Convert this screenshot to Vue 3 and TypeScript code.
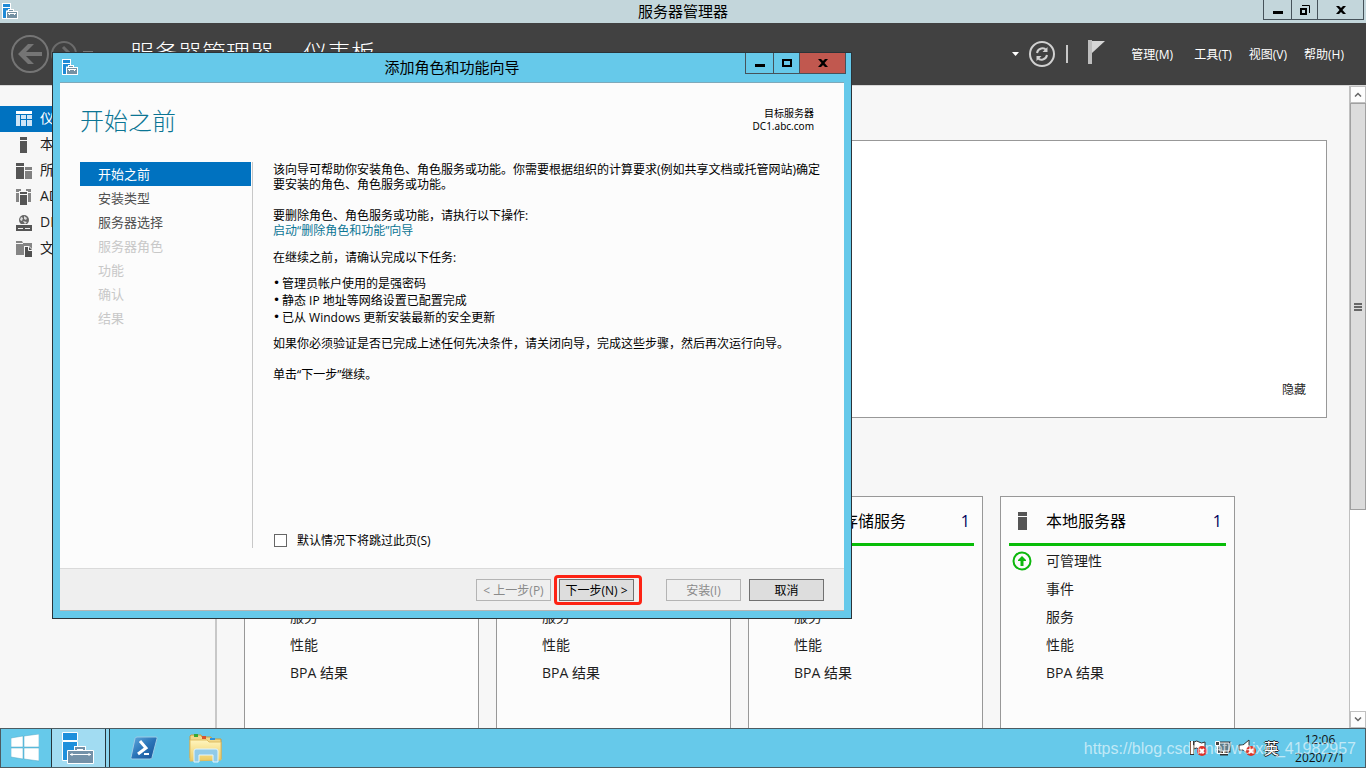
<script setup lang="ts">
import { ref } from 'vue'

interface NavItem {
  label: string
  icon: string
}
interface Tile {
  title: string
  count: number
  icon: string
}
interface Step {
  label: string
  state: 'current' | 'ready' | 'locked'
}

const navItems: NavItem[] = [
  { label: '仪表板', icon: 'dash' },
  { label: '本地服务器', icon: 'server' },
  { label: '所有服务器', icon: 'servers' },
  { label: 'AD DS', icon: 'adds' },
  { label: 'DNS', icon: 'dns' },
  { label: '文件和存储服务', icon: 'files' },
]

const menus: string[] = ['管理(M)', '工具(T)', '视图(V)', '帮助(H)']

const tiles: Tile[] = [
  { title: 'AD DS', count: 1, icon: 'adds' },
  { title: 'DNS', count: 1, icon: 'dns' },
  { title: '文件和存储服务', count: 1, icon: 'files' },
  { title: '本地服务器', count: 1, icon: 'server' },
]
const tileRows: string[] = ['可管理性', '事件', '服务', '性能', 'BPA 结果']

const steps: Step[] = [
  { label: '开始之前', state: 'current' },
  { label: '安装类型', state: 'ready' },
  { label: '服务器选择', state: 'ready' },
  { label: '服务器角色', state: 'locked' },
  { label: '功能', state: 'locked' },
  { label: '确认', state: 'locked' },
  { label: '结果', state: 'locked' },
]

const tasks: string[] = [
  '管理员帐户使用的是强密码',
  '静态 IP 地址等网络设置已配置完成',
  '已从 Windows 更新安装最新的安全更新',
]

const skipPage = ref(false)
</script>

<template>
  <div class="desktop">
    <svg class="defs" width="0" height="0" aria-hidden="true">
      <symbol id="ic-app" viewBox="0 0 16 16">
        <path d="M0 0h9v7h-4v9h-5z" fill="#fff" />
        <path d="M1 1h7v3h-7zM1 5h7v2h-3l-1 1v7h-3z" fill="#1e8ad6" />
        <path d="M6 6h6v2h4v8h-12v-8h2z" fill="#fff" />
        <path d="M5 9h10v6h-10zM7 7h4v1h-4z" fill="#7491a3" />
        <path d="M6 10.500h8M7.500 10v2M12.500 10v2" stroke="#fff" fill="none" />
      </symbol>
      <symbol id="ic-dash" viewBox="0 0 16 16">
        <path d="M0 0h16v3h-16z" fill="#fff" />
        <path d="M0 4h4v11h-4zM5 4h5v4h-5zM11 4h5v4h-5zM5 9h5v6h-5zM11 9h5v6h-5z" fill="#cfe5f6" />
      </symbol>
      <symbol id="ic-server" viewBox="0 0 16 16">
        <path d="M4 0h7v3h-7zM4 4h7v12h-7z" fill="#555" />
      </symbol>
      <symbol id="ic-server-lg" viewBox="0 0 18 18">
        <path d="M4 0h9v4h-9zM4 5h9v13h-9z" fill="#555" />
      </symbol>
      <symbol id="ic-servers" viewBox="0 0 16 16">
        <path d="M0 0h8v3h-8zM0 4h8v12h-8z" fill="#555" />
        <path d="M9 4h7v3h-7zM9 8h7v8h-7z" fill="#808080" />
      </symbol>
      <symbol id="ic-adds" viewBox="0 0 16 16">
        <path d="M0 0h5v2h-2v1h-3zM10 0h5v3h-3v-1h-2zM0 4h3v9h-3zM12 4h3v9h-3z" fill="#858585" />
        <path d="M4 3h7v2h-7zM4 6h7v10h-7z" fill="#555" />
      </symbol>
      <symbol id="ic-dns" viewBox="0 0 16 16">
        <circle cx="8" cy="5" r="5" fill="#666" />
        <path d="M5 2l2 1-1 3-2-1zM8 1l3 2-1 2-2-1zM7 6l4 1-2 2z" fill="#ddd" />
        <path d="M0 9h16v7h-16z" fill="#555" />
        <path d="M0 9.500h16" stroke="#f7f7f7" />
        <path d="M2 13.500h5M9 13.500h5" stroke="#eee" />
      </symbol>
      <symbol id="ic-files" viewBox="0 0 16 16">
        <path d="M0 0h6l1 2h9v12h-16z" fill="#858585" />
        <path d="M0 2.500h7" stroke="#f7f7f7" />
        <path d="M8 5h5l4 4v8h-9z" fill="#f7f7f7" />
        <path d="M9 6h4l3 3v7h-7z" fill="#505050" />
        <path d="M12.500 6v3.500h3.500" stroke="#f7f7f7" fill="none" />
      </symbol>
    </svg>

    <header class="titlebar">
      <svg class="app-icon"><use href="#ic-app" /></svg>
      <span class="titletext">服务器管理器</span>
      <div class="winbtns">
        <button class="wb w-min" aria-label="最小化"><svg width="10" height="10"><path d="M0 6h10v3H0z" /></svg></button>
        <button class="wb w-max" aria-label="还原">
          <svg width="10" height="10"><path d="M1 4h5v5H1z" fill="none" stroke="#000" stroke-width="2" /><path d="M2 .5h7.500v7.500" fill="none" stroke="#000" /></svg>
        </button>
        <button class="wb w-close" aria-label="关闭"><svg width="10" height="10"><path d="M0 1h3l2 2 2-2h3L6.500 5 10 9H7L5 7 3 9H0l3.500-4z" /></svg></button>
      </div>
    </header>

    <div class="appheader">
      <button class="nav-back" aria-label="后退">
        <svg width="38" height="38" viewBox="0 0 38 38" fill="none">
          <circle cx="19" cy="19" r="18" stroke="#757575" stroke-width="2" />
          <path d="M31 19H10" stroke="#757575" stroke-width="4" />
          <path d="M17 9h6l-10 10 10 10h-6L7 19z" fill="#757575" />
        </svg>
      </button>
      <button class="nav-fwd" aria-label="前进">
        <svg width="26" height="26" viewBox="0 0 26 26" fill="none">
          <circle cx="13" cy="13" r="12" stroke="#6b6b6b" stroke-width="2" />
          <path d="M5 13h14M12 6l7 7-7 7" stroke="#6b6b6b" stroke-width="3" />
        </svg>
      </button>
      <span class="nav-drop"></span>
      <h1 class="crumb">服务器管理器<span class="sep">▸</span>仪表板</h1>
      <div class="tools">
        <svg class="caret" width="8" height="4"><path d="M0 0h7L3.500 4z" fill="#fff" /></svg>
        <button class="refresh" aria-label="刷新">
          <svg width="26" height="26" viewBox="0 0 26 26" fill="none" stroke="#d0d0d0">
            <circle cx="13" cy="13" r="12" stroke-width="2" />
            <path d="M8 12c1-5 7-6 9-3M18 14c-1 5-7 6-9 3" stroke-width="2" />
            <path d="M18.500 6v5h-5zM7.500 20v-5h5z" fill="#d0d0d0" stroke="none" />
          </svg>
        </button>
        <span class="bar"></span>
        <button class="flag" aria-label="通知">
          <svg width="18" height="24"><path d="M0 0h4v24H0z" fill="#bdbdbd" /><path d="M4 1h13L4 13z" fill="#d6d6d6" /></svg>
        </button>
        <nav class="menus">
          <button v-for="m in menus" :key="m">{{ m }}</button>
        </nav>
      </div>
    </div>

    <div class="workspace">
      <nav class="sidebar">
        <a v-for="(n, i) in navItems" :key="n.label" href="#" class="side" :class="{ active: i === 0 }">
          <svg class="side-icon"><use :href="'#ic-' + n.icon" /></svg>
          <span>{{ n.label }}</span>
        </a>
      </nav>
      <main class="main">
        <section class="welcome">
          <button class="hide">隐藏</button>
        </section>
        <section class="tiles">
          <article v-for="t in tiles" :key="t.title" class="tile">
            <div class="tile-head">
              <svg class="tile-icon"><use :href="t.icon === 'server' ? '#ic-server-lg' : '#ic-' + t.icon" /></svg>
              <h2>{{ t.title }}</h2>
              <span class="count">{{ t.count }}</span>
            </div>
            <ul>
              <li v-for="(r, i) in tileRows" :key="r">
                <svg v-if="i === 0" class="up" width="20" height="20" viewBox="0 0 20 20">
                  <circle cx="10" cy="10" r="8.500" fill="none" stroke="#0db80d" stroke-width="2" />
                  <path d="M10 5l4 4v1h-2.500v5h-3v-5H6V9z" fill="#0db80d" />
                </svg>
                <a href="#">{{ r }}</a>
              </li>
            </ul>
          </article>
        </section>
      </main>
      <div class="scrollbar">
        <button aria-label="向上滚动"><svg width="8" height="5"><path d="M1 4.500L4 1.500l3 3" fill="none" stroke="#666" stroke-width="1.500" /></svg></button>
        <div class="track">
          <div class="thumb"><i></i><i></i><i></i></div>
        </div>
        <button aria-label="向下滚动"><svg width="8" height="5"><path d="M1 .5l3 3 3-3" fill="none" stroke="#666" stroke-width="1.500" /></svg></button>
      </div>
    </div>

    <footer class="taskbar">
      <button class="start" aria-label="开始">
        <svg width="28" height="28" viewBox="0 0 28 28">
          <path d="M0 4l12-2v11H0zM13 2l15-2v13H13zM0 14h12v11L0 23zM13 14h15v13l-15-2z" fill="#fff" stroke="#4fa6c4" stroke-width=".5" />
        </svg>
      </button>
      <button class="task running" aria-label="服务器管理器">
        <svg width="32" height="32" viewBox="0 0 32 32">
          <path d="M.5.5h15v8H.5zM.5 9.500h15v9l-10 1v9h-5z" fill="#1e90dc" stroke="#fff" />
          <path d="M14 19v-3h8v3" fill="none" stroke="#fff" stroke-width="4" />
          <path d="M5.500 18.500h26v13h-26z" fill="#7491a8" stroke="#fff" />
          <path d="M14 18v-2h8v2" fill="none" stroke="#7491a8" stroke-width="2" />
          <path d="M8 22.500h21M10 21v3M27 21v3" stroke="#fff" fill="none" />
        </svg>
      </button>
      <span class="group"></span>
      <button class="ps" aria-label="PowerShell">
        <svg width="28" height="24" viewBox="0 0 28 24">
          <defs>
            <linearGradient id="psg" x1="0" y1="0" x2="1" y2="1">
              <stop offset="0" stop-color="#63abdf" />
              <stop offset=".5" stop-color="#2a74b8" />
              <stop offset="1" stop-color="#174f92" />
            </linearGradient>
          </defs>
          <path d="M7 1h19q1.500 0 1 1.500L22 21.500q-.5 1.500-2 1.500H2Q.5 23 1 21.500L5 2.500Q5.500 1 7 1z" fill="url(#psg)" stroke="#9ccbe6" />
          <path d="M10 5l6 7-8 6" fill="none" stroke="#fff" stroke-width="3" />
          <path d="M14 18h5" stroke="#fff" stroke-width="2" />
        </svg>
      </button>
      <button class="ex" aria-label="文件资源管理器">
        <svg width="34" height="30" viewBox="0 0 34 30">
          <defs>
            <linearGradient id="exg" x1="0" y1="0" x2="0" y2="1">
              <stop offset="0" stop-color="#fff5bd" />
              <stop offset="1" stop-color="#eccb62" />
            </linearGradient>
          </defs>
          <path d="M2 2h10l1 2h9l1 2h9v20l-28 1-3-2V3z" fill="#f0d88a" stroke="#c39a45" />
          <path d="M5 1h4v3H5z" fill="#35a835" /><path d="M13 3h4v3h-4z" fill="#d8542c" /><path d="M21 5h5v2h-5z" fill="#2b90dc" />
          <path d="M1 7h17l2 2h12v18l-31 1z" fill="url(#exg)" stroke="#dfbd62" />
          <path d="M5 29V18q0-2 2-2h20q2 0 2 2v11h-5v-7H10v7z" fill="#91cbe8" stroke="#e3f5fc" />
        </svg>
      </button>
      <div class="tray">
        <svg width="20" height="18" viewBox="0 0 20 18">
          <path d="M2 2v14" stroke="#333" stroke-width="4" /><path d="M2 2v13" stroke="#fff" stroke-width="2" />
          <path d="M4 3q3-2 5 0t6 0v7q-3 2-6 0t-5 0z" fill="#fff" stroke="#333" />
          <circle cx="12" cy="12" r="5" fill="#dc3226" /><path d="M10 10l4 4M14 10l-4 4" stroke="#fff" stroke-width="2" />
        </svg>
        <svg width="20" height="18" viewBox="0 0 20 18">
          <path d="M5 4h10v8H5zM9 12v3M6 15h8" fill="none" stroke="#333" stroke-width="3" />
          <path d="M5 4h10v8H5zM9.500 12v3M6 14.500h8" fill="#5e7c88" stroke="#fff" />
          <path d="M1.500 2.500h4v4h-4zM3.500 7v7.500h3" fill="#444" stroke="#fff" />
        </svg>
        <svg width="20" height="18" viewBox="0 0 20 18">
          <path d="M1 6h4l6-5v15l-6-5H1z" fill="#fff" stroke="#333" />
          <circle cx="13" cy="12" r="5" fill="#dc3226" /><path d="M11 10l4 4M15 10l-4 4" stroke="#fff" stroke-width="2" />
        </svg>
        <span class="ime">英</span>
      </div>
      <div class="clock"><span>12:06</span><span>2020/7/1</span></div>
    </footer>
    <div class="watermark">https://blog.csdn.net/weixin_41982957</div>

    <section class="dialog" role="dialog" aria-labelledby="dlg-title">
      <header class="dlg-bar">
        <svg class="app-icon"><use href="#ic-app" /></svg>
        <span id="dlg-title" class="titletext">添加角色和功能向导</span>
        <div class="winbtns">
          <button class="wb w-min" aria-label="最小化"><svg width="10" height="10"><path d="M0 6h10v3H0z" /></svg></button>
          <button class="wb w-max" aria-label="最大化"><svg width="10" height="10"><path d="M1 2h8v6H1z" fill="none" stroke="#000" stroke-width="2" /></svg></button>
          <button class="wb w-close red" aria-label="关闭"><svg width="10" height="10"><path d="M0 1h3l2 2 2-2h3L6.500 5 10 9H7L5 7 3 9H0l3.500-4z" /></svg></button>
        </div>
      </header>
      <div class="dlg-body">
        <div class="dlg-head">
          <h2>开始之前</h2>
          <div class="target"><span>目标服务器</span><span class="host">DC1.abc.com</span></div>
        </div>
        <div class="dlg-cols">
          <ol class="steps">
            <li v-for="s in steps" :key="s.label" :class="s.state">{{ s.label }}</li>
          </ol>
          <div class="text">
            <p>该向导可帮助你安装角色、角色服务或功能。你需要根据组织的计算要求(例如共享文档或托管网站)确定要安装的角色、角色服务或功能。</p>
            <p class="p-remove">要删除角色、角色服务或功能，请执行以下操作:<br /><a href="#">启动“删除角色和功能”向导</a></p>
            <p>在继续之前，请确认完成以下任务:</p>
            <ul>
              <li v-for="t in tasks" :key="t">{{ t }}</li>
            </ul>
            <p class="p-verify">如果你必须验证是否已完成上述任何先决条件，请关闭向导，完成这些步骤，然后再次运行向导。</p>
            <p>单击“下一步”继续。</p>
            <label class="skip"><input v-model="skipPage" type="checkbox" />默认情况下将跳过此页(S)</label>
          </div>
        </div>
        <div class="dlg-foot">
          <button class="btn" disabled>&lt; 上一步(P)</button>
          <span class="mark"><button class="btn">下一步(N) &gt;</button></span>
          <button class="btn install" disabled>安装(I)</button>
          <button class="btn">取消</button>
        </div>
      </div>
    </section>
  </div>
</template>

<style>
body {
  margin: 0;
}
</style>

<style scoped>
.desktop {
  position: relative;
  display: flex;
  flex-direction: column;
  height: 100vh;
  overflow: hidden;
  background: #f7f7f7;
  color: #1e1e1e;
  font-family: 'Open Sans', 'Noto Sans CJK SC', sans-serif;
  font-size: 12px;
}
.desktop * {
  box-sizing: border-box;
}
.defs {
  position: absolute;
}
button {
  margin: 0;
  padding: 0;
  border: 0;
  background: none;
  color: inherit;
  font: inherit;
  display: flex;
  align-items: center;
  justify-content: center;
  flex: none;
}
svg {
  display: block;
  flex: none;
}
a {
  color: inherit;
  text-decoration: none;
}
h1,
h2,
p,
ul,
ol {
  margin: 0;
  padding: 0;
  font-weight: 400;
  list-style: none;
}
.app-icon {
  width: 16px;
  height: 16px;
}

/* main window caption */
.titlebar {
  display: grid;
  grid-template-columns: 1fr auto 1fr;
  height: 23px;
  flex: none;
  padding: 0 2px;
  background: #c3d6db;
  color: #000;
}
.titlebar .app-icon {
  margin-top: 3px;
}
.titletext {
  font-size: 15px;
  line-height: 22px;
}
.winbtns {
  display: flex;
  justify-self: end;
}
.wb {
  height: 20px;
  border: 1px solid #46525a;
  border-top: 0;
  border-left: 0;
}
.w-min {
  width: 29px;
  border-left: 1px solid #46525a;
}
.w-max {
  width: 26px;
}
.w-close {
  width: 46px;
}
.red {
  background: #c1584f;
}

/* dark header */
.appheader {
  display: flex;
  align-items: center;
  height: 62px;
  flex: none;
  padding: 0 22px 0 11px;
  background: #414141;
  color: #fff;
}
.nav-fwd {
  margin-left: 2px;
}
.nav-drop {
  width: 10px;
  height: 6px;
  margin-left: 6px;
  border-top: 1px solid #777;
}
.crumb {
  margin-left: 37px;
  font-size: 24px;
  line-height: 32px;
  font-weight: 300;
}
.sep {
  display: inline-block;
  width: 29px;
  font-size: 16px;
  text-align: center;
}
.tools {
  display: flex;
  align-items: center;
  margin-left: auto;
}
.refresh {
  margin-left: 9px;
}
.bar {
  width: 2px;
  height: 18px;
  margin-left: 11px;
  background: #c8c8c8;
}
.flag {
  margin: 0 25px 4px 20px;
}
.menus {
  display: flex;
  gap: 17px;
}
.menus button:first-child {
  margin-right: 4px;
}

/* content */
.workspace {
  display: flex;
  flex: 1;
  min-height: 0;
  border-top: 1px solid #d8d8d8;
}
.sidebar {
  width: 217px;
  flex: none;
  padding-top: 20px;
  border-right: 2px solid #c8c8c8;
}
.side {
  display: flex;
  align-items: center;
  gap: 8px;
  height: 26px;
  padding-left: 16px;
  font-size: 14px;
  line-height: 20px;
}
.side span {
  padding-bottom: 2px;
}
.side.active {
  background: #0072c0;
  color: #fff;
}
.side-icon {
  width: 16px;
  height: 16px;
}
.main {
  flex: 1;
  min-width: 0;
  overflow: hidden;
  padding: 54px 22px 0 27px;
}
.welcome {
  display: flex;
  align-items: flex-end;
  justify-content: flex-end;
  height: 278px;
  padding: 18px 20px;
  border: 1px solid #989898;
  background: #fff;
}
.hide {
  line-height: 18px;
}
.tiles {
  display: grid;
  grid-template-columns: repeat(4, 235px);
  gap: 17px;
  margin-top: 78px;
}
.tile {
  height: 260px;
  padding: 0 8px;
  border: 1px solid #989898;
  background: #fcfcfc;
}
.tile-head {
  display: flex;
  align-items: center;
  height: 49px;
  padding: 2px 4px 0 5px;
  border-bottom: 3px solid #08bd08;
  color: #000;
}
.tile-head h2 {
  margin-left: 14px;
  font-size: 16px;
  line-height: 24px;
}
.tile-icon {
  width: 18px;
  height: 18px;
}
.count {
  margin-left: auto;
  color: #00005a;
  font-size: 16px;
  line-height: 24px;
}
.tile li {
  display: flex;
  align-items: center;
  justify-content: flex-end;
  height: 28px;
  font-size: 14px;
}
.tile li a {
  width: 180px;
}
.up {
  margin: 2px auto 0 3px;
}
.scrollbar {
  display: flex;
  flex-direction: column;
  width: 17px;
  flex: none;
  border-left: 1px solid #c0c0c0;
  background: #fff;
}
.scrollbar button {
  height: 17px;
  border: 1px solid #c0c0c0;
  background: #fdfdfd;
}
.track {
  flex: 1;
}
.thumb {
  display: flex;
  flex-direction: column;
  align-items: center;
  justify-content: center;
  gap: 1px;
  height: 67%;
  border: 1px solid #a0a0a0;
  background: #dcdcdc;
}
.thumb i {
  width: 8px;
  height: 2px;
  background: #666;
}

/* taskbar */
.taskbar {
  display: flex;
  align-items: center;
  height: 40px;
  flex: none;
  border: 1px solid #4d5b61;
  background: #66c9ea;
  color: #111;
}
.start {
  width: 50px;
  padding-right: 2px;
}
.task {
  width: 55px;
  height: 38px;
  padding-right: 2px;
}
.running {
  border: 1px solid #26353c;
  border-width: 0 1px;
  background: #a2dcf2;
}
.group {
  width: 4px;
  height: 38px;
  border-right: 1px solid #26353c;
  background: #8cd4ee;
}
.ps {
  margin-left: 20px;
}
.ex {
  margin-left: 31px;
}
.tray {
  display: flex;
  align-items: center;
  gap: 4px;
  margin-left: auto;
}
.ime {
  margin-left: 2px;
  color: #fff;
  font-size: 15px;
  line-height: 18px;
  text-shadow: 1px 0 0 #222, -1px 0 0 #222, 0 1px 0 #222, 0 -1px 0 #222;
}
.clock {
  display: flex;
  flex-direction: column;
  align-items: center;
  width: 82px;
  margin-right: 4px;
  padding-top: 2px;
  line-height: 18px;
}
.watermark {
  position: absolute;
  right: 10px;
  bottom: 10px;
  color: rgba(255, 255, 255, 0.6);
  font-family: 'Liberation Sans', Arial, sans-serif;
  font-size: 16px;
  line-height: 18px;
}

/* wizard window */
.dialog {
  position: absolute;
  left: 52px;
  top: 52px;
  display: flex;
  flex-direction: column;
  width: 800px;
  height: 567px;
  padding: 0 7px 7px;
  border: 1px solid #2b3338;
  background: #66c9ea;
  color: #000;
}
.dlg-bar {
  display: grid;
  grid-template-columns: 1fr auto 1fr;
  height: 29px;
  flex: none;
}
.dlg-bar .app-icon {
  margin: 6px 0 0 2px;
}
.dlg-bar .titletext {
  line-height: 28px;
}
.dlg-bar .winbtns {
  margin-right: -2px;
}
.dlg-bar .wb {
  height: 21px;
}
.dlg-body {
  display: flex;
  flex-direction: column;
  flex: 1;
  min-height: 0;
  border-top: 1px solid #7fa9ba;
  background: #fcfcfc;
}
.dlg-head {
  display: flex;
  justify-content: space-between;
  height: 79px;
  flex: none;
  padding: 24px 30px 0 20px;
}
.dlg-head h2 {
  color: #0b7594;
  font-size: 24px;
  line-height: 28px;
  font-weight: 300;
}
.target {
  display: flex;
  flex-direction: column;
  align-items: flex-end;
  font-size: 10px;
  line-height: 13px;
}
.host {
  font-family: 'Noto Sans', sans-serif;
}
.dlg-cols {
  display: flex;
  flex: 1;
  padding: 0 20px 20px;
}
.steps {
  width: 173px;
  flex: none;
  padding-right: 1px;
  border-right: 1px solid #c8c8c8;
}
.steps li {
  height: 24px;
  padding-left: 18px;
  font-size: 13px;
  line-height: 24px;
}
.steps .current {
  background: #0072c0;
  color: #fff;
}
.steps .ready {
  color: #505050;
}
.steps .locked {
  color: #c8c8c8;
}
.text {
  display: flex;
  flex-direction: column;
  flex: 1;
  padding: 0 0 0 20px;
  line-height: 15px;
}
.p-remove {
  margin: 16px 0 12px;
}
.p-remove a {
  color: #0b7594;
}
.text ul {
  margin: 10px 0;
}
.text li {
  display: flex;
  line-height: 17px;
}
.text li::before {
  content: '•';
  width: 9px;
  font-family: 'DejaVu Sans', sans-serif;
}
.p-verify {
  margin-bottom: 16px;
}
.skip {
  display: flex;
  align-items: center;
  gap: 10px;
  margin-top: auto;
}
.skip input {
  appearance: none;
  width: 13px;
  height: 13px;
  margin: 0 0 0 1px;
  border: 1px solid #666;
  background: #fff;
}
.dlg-foot {
  display: flex;
  align-items: center;
  justify-content: flex-end;
  height: 43px;
  flex: none;
  padding-right: 20px;
  border-top: 1px solid #dadada;
  border-bottom: 1px solid #b5b5b5;
  background: #efefef;
}
.btn {
  width: 75px;
  height: 22px;
  border: 1px solid #707070;
  background: #dddddd;
  white-space: nowrap;
}
.btn:disabled {
  border-color: #b4b4b4;
  background: #efefef;
  color: #8a8a8a;
}
.mark {
  margin: 0 24px 0 3px;
  padding: 1px 5px 1px 2px;
  border: 3px solid #fd2314;
  border-radius: 4px;
}
.install {
  margin-right: 8px;
}
</style>
